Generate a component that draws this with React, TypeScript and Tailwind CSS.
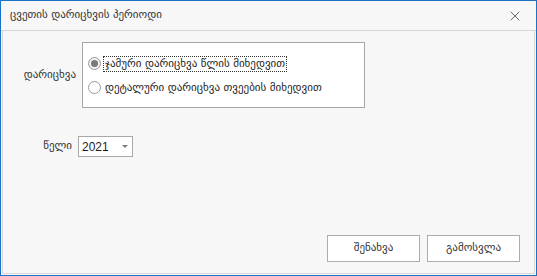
import { X } from 'lucide-react'

export default function App() {
  return (
    <div
      className="flex h-[276px] w-[537px] flex-col border border-[#1a73c9] bg-[#f7f7f7] text-[12px] text-[#1e1e1e]"
      style={{ fontFamily: '"DejaVu Sans", "Noto Sans", sans-serif' }}
    >
      {/* title bar */}
      <div className="flex h-[30px] shrink-0 items-center justify-between border-b border-[#d6d6d6] pl-[9px] pr-[13px]">
        <span className="text-[11px] text-[#333]">ცვეთის დარიცხვის პერიოდი</span>
        <X size={16} strokeWidth={1.2} className="text-[#444]" />
      </div>

      <div className="mx-[1px] mb-[1px] flex flex-1 flex-col border-x border-b border-[#d8d8d8] bg-[#f7f7f7]">
        {/* charge type */}
        <div className="mt-[11px] flex items-center">
          <span className="w-[79px] pr-[6px] text-right text-[11px] text-[#333]">დარიცხვა</span>
          <div className="flex h-[66px] w-[283px] flex-col justify-center gap-[9px] border border-[#a6a6a6] bg-white pl-[5px]">
            <label className="flex items-center gap-[2px]">
              <span className="flex h-[13px] w-[13px] items-center justify-center rounded-full border border-[#9a9a9a] bg-[#f1f1f1]">
                <span className="h-[7px] w-[7px] rounded-full bg-[#7a7a7a]" />
              </span>
              <span className="border border-dotted border-[#333] px-[1px] text-[11px] leading-[14px]">
                ჯამური დარიცხვა წლის მიხედვით
              </span>
            </label>
            <label className="flex items-center gap-[4px]">
              <span className="h-[13px] w-[13px] rounded-full border border-[#9a9a9a] bg-white" />
              <span className="text-[11px] leading-[14px]">დეტალური დარიცხვა თვეების მიხედვით</span>
            </label>
          </div>
        </div>

        {/* year */}
        <div className="mt-[28px] flex items-center">
          <span className="w-[75px] pr-[6px] text-right text-[11px] text-[#333]">წელი</span>
          <div className="flex h-[21px] w-[55px] items-center justify-between border border-[#a9a9a9] bg-white pl-[3px] pr-[4px]">
            <span className="text-[12px]" style={{ fontFamily: '"Liberation Sans", sans-serif' }}>2021</span>
            <span className="h-0 w-0 border-x-[3px] border-t-[3px] border-x-transparent border-t-[#7d7d7d]" />
          </div>
        </div>

        {/* buttons */}
        <div className="mt-auto mb-[11px] flex justify-end gap-[7px] pr-[14px]">
          <button className="h-[27px] w-[93px] border border-[#adadad] bg-white text-[11px] text-[#333]">შენახვა</button>
          <button className="h-[27px] w-[93px] border border-[#adadad] bg-white text-[11px] text-[#333]">გამოსვლა</button>
        </div>
      </div>
    </div>
  )
}
